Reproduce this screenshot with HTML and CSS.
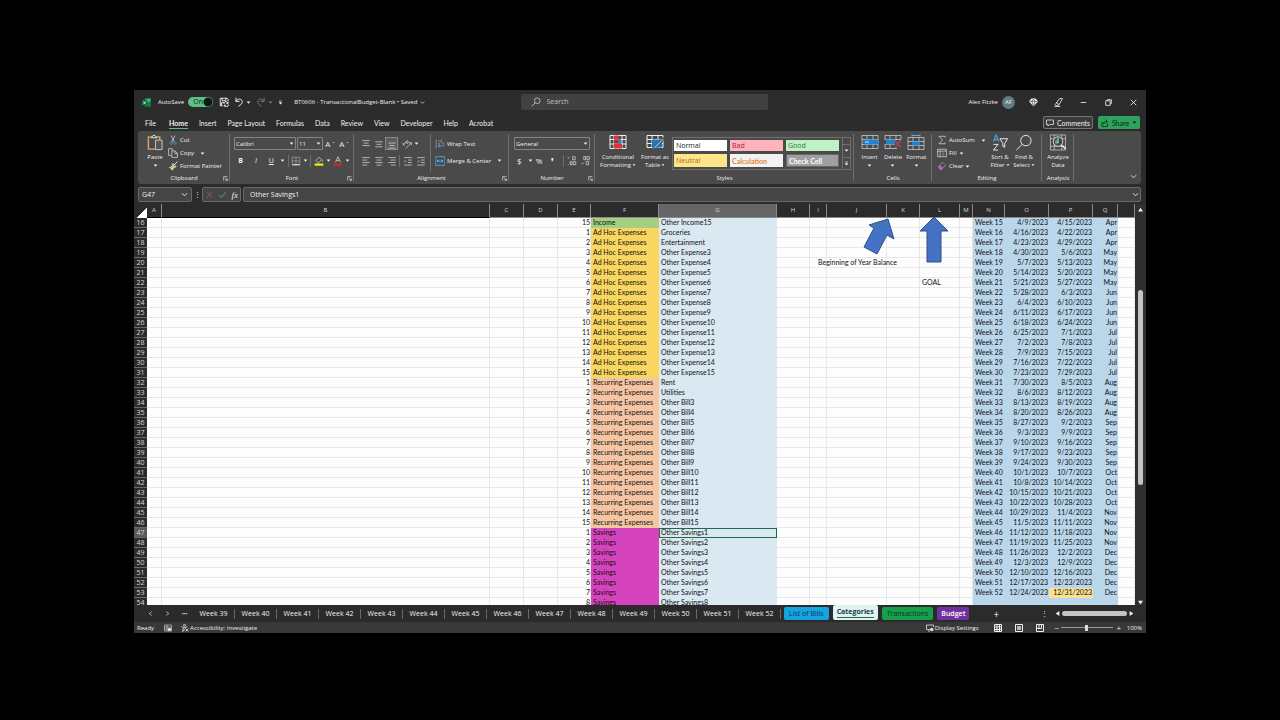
FILE: index.html
```html
<!DOCTYPE html>
<html lang="en">
<head>
  <meta charset="UTF-8">
  <meta name="viewport" content="width=device-width, initial-scale=1.0">
  <title>BT0606 - TransactionalBudget-Blank</title>
  <link rel="stylesheet" href="styles.css">
</head>
<body>
  <svg class="sprite" aria-hidden="true">
    <symbol id="caret" viewBox="0 0 8 8"><path d="M1 2.5h6L4 6z" fill="currentColor"/></symbol>
    <symbol id="chevron" viewBox="0 0 8 8"><path d="M1 2.5l3 3 3-3" class="line"/></symbol>
    <symbol id="launcher" viewBox="0 0 8 8"><path d="M1 7V1h6M3 3l4 4M7 4v3H4" class="line"/></symbol>
    <symbol id="excel" viewBox="0 0 16 16"><path d="M5 1h10v14H5z" fill="#21a366"/><path d="M10 1h5v5h-5z" fill="#33c481"/><path d="M5 8h10v7H5z" fill="#107c41"/><path d="M0 4h9v9H0z" fill="#0b6a38"/><path d="M2.500 6l4 5M6.500 6l-4 5" stroke="#fff" stroke-width="1.400"/></symbol>
    <symbol id="save" viewBox="0 0 16 16"><path d="M2 14V2h11l1.500 1.500V7M5 2v4h6V2M2 14h4M4 14V9h4" class="line thick"/><path d="M8 11a3 3 0 0 1 6-1M14.500 8v2.500H12M15 12a3 3 0 0 1-6 1M8.500 15.500V13H11" class="line thick"/></symbol>
    <symbol id="undo" viewBox="0 0 16 16"><path d="M3 1v6h6M3 7c2-3 5-5 8-3s3 5 0 8l-4 3" class="line thick"/></symbol>
    <symbol id="redo" viewBox="0 0 16 16"><path d="M13 1v6H7M13 7c-2-3-5-5-8-3s-3 5 0 8l4 3" class="line thick"/></symbol>
    <symbol id="customize" viewBox="0 0 8 8"><path d="M1.500 1.500h5" class="line"/><path d="M1 3.500h6L4 7z" fill="currentColor"/></symbol>
    <symbol id="search" viewBox="0 0 16 16"><circle cx="10" cy="6" r="4.500" class="line"/><path d="M7 9l-6 6" class="line"/></symbol>
    <symbol id="gem" viewBox="0 0 16 16"><path d="M4 1h8l4 5-8 9-8-9z" fill="currentColor"/><path d="M1 6h14M5 6l3 8 3-8-3-4z" stroke="#2b2b2b" fill="none"/></symbol>
    <symbol id="pen" viewBox="0 0 16 16"><path d="M10 1h5L9 12l-5 2-2-2zM9 12l-5-4M1 15h10" class="line thick"/></symbol>
    <symbol id="minimize" viewBox="0 0 16 16"><path d="M3 8h10" class="line thick"/></symbol>
    <symbol id="restore" viewBox="0 0 16 16"><path d="M3 5h8v8H3zM6 5V3h7v7h-2" class="line thick"/></symbol>
    <symbol id="close" viewBox="0 0 16 16"><path d="M3 3l10 10M13 3L3 13" class="line thick"/></symbol>
    <symbol id="comment" viewBox="0 0 16 16"><path d="M1 2h14v9H7l-3 3v-3H1z" class="line thick"/></symbol>
    <symbol id="share" viewBox="0 0 16 16"><path d="M5 7H2v8h11V9M5 11c0-4 3-6 7-6M9 1l4 4-4 4" class="line thick"/></symbol>
    <symbol id="paste" viewBox="0 0 18 18"><path d="M5 3H2v13h7" stroke="#e0a458" stroke-width="1.500" fill="none"/><path d="M11 3h3v3" stroke="#e0a458" stroke-width="1.500" fill="none"/><path d="M5 4c0-2 2-1 3-3 1 2 3 1 3 3z" class="line"/><path d="M9.500 6.500h7v10h-7z" fill="#555" stroke="#ccc"/></symbol>
    <symbol id="cut" viewBox="0 0 16 16"><path d="M5 1l5 10M11 1L6 11" class="line"/><circle cx="5" cy="13" r="2" fill="none" stroke="#4aa3df"/><circle cx="11" cy="13" r="2" fill="none" stroke="#4aa3df"/></symbol>
    <symbol id="copy" viewBox="0 0 16 16"><path d="M5 12H1V1h6v3M6 4.500h5l4 4V15H6zM11 5v4h4" class="line"/></symbol>
    <symbol id="painter" viewBox="0 0 16 16"><path d="M15 1l-5 5M8 4l5 5-2 1-4-4z" class="line thick"/><path d="M7 6l4 4-4 5-6-5c3 0 4-1 6-4z" fill="#d8cf9a"/><path d="M4 12l2-2" stroke="#555"/></symbol>
    <symbol id="borders" viewBox="0 0 16 16"><path d="M2 2h12v12H2zM8 2v12M2 8h12" class="line dim"/><path d="M2 14h12" class="line thick"/></symbol>
    <symbol id="fill" viewBox="0 0 16 16"><path d="M3 7l5-5 4 4-5 5zM13 6l1 3" class="line"/><path d="M1 12h14v3.500H1z" fill="#f2ee12"/></symbol>
    <symbol id="font-color" viewBox="0 0 16 16"><path d="M4 10L8 1l4 9M5.500 7h5" class="line"/><path d="M1 12h14v3.500H1z" fill="#d8232a"/></symbol>
    <symbol id="align-top" viewBox="0 0 16 16"><path d="M2 2.500h12M4 6.500h8M2 10.500h12" class="line"/></symbol>
    <symbol id="align-middle" viewBox="0 0 16 16"><path d="M2 4.500h12M4 8.500h8M2 12.500h12" class="line"/></symbol>
    <symbol id="align-bottom" viewBox="0 0 16 16"><path d="M2 6.500h12M4 10.500h8M2 14.500h12" class="line"/></symbol>
    <symbol id="align-left" viewBox="0 0 16 16"><path d="M2 2.500h12M2 6.500h8M2 10.500h12M2 14.500h8" class="line"/></symbol>
    <symbol id="align-center" viewBox="0 0 16 16"><path d="M2 2.500h12M4 6.500h8M2 10.500h12M4 14.500h8" class="line"/></symbol>
    <symbol id="align-right" viewBox="0 0 16 16"><path d="M2 2.500h12M6 6.500h8M2 10.500h12M6 14.500h8" class="line"/></symbol>
    <symbol id="orient" viewBox="0 0 16 16"><path d="M1 6l3 5M1 10l5-5M6 15L15 6M15 10V6h-4" class="line"/><circle cx="8" cy="5" r="2" class="line"/></symbol>
    <symbol id="outdent" viewBox="0 0 16 16"><path d="M2 2.500h12M8 6.500h6M8 10.500h6M2 14.500h12" class="line"/><path d="M6 8.500H2M4 6.500l-2 2 2 2" stroke="#6aa9d6" fill="none"/></symbol>
    <symbol id="indent" viewBox="0 0 16 16"><path d="M2 2.500h12M8 6.500h6M8 10.500h6M2 14.500h12" class="line"/><path d="M2 8.500h4M4 6.500l2 2-2 2" stroke="#6aa9d6" fill="none"/></symbol>
    <symbol id="wrap" viewBox="0 0 16 16"><path d="M2 1v14M5 3h4M5 7h3M10 1v4" class="line dim"/><path d="M5 11h7c4 0 3-5 0-5h-2M8 8l-3 3 3 3" stroke="#6aa9d6" stroke-width="1.300" fill="none"/></symbol>
    <symbol id="merge" viewBox="0 0 16 16"><path d="M1 1h14v14H1z" class="line dim"/><path d="M1 4h14v8H1z" fill="#1c5d8c"/><path d="M3 8h10M5 6L3 8l2 2M11 6l2 2-2 2" stroke="#9ed0f5" fill="none"/></symbol>
    <symbol id="dec-more" viewBox="0 0 16 16"><path d="M5 3H1M3 1L1 3l2 2" stroke="#6aa9d6" fill="none"/><path d="M9 1h4v5H9zM5 9h3v5H5zM10 9h4v5h-4zM2 13v1" class="line"/></symbol>
    <symbol id="dec-less" viewBox="0 0 16 16"><path d="M1 12h5M4 10l2 2-2 2" stroke="#6aa9d6" fill="none"/><path d="M10 9h4v5h-4zM6 1h3v5H6zM11 1h4v5h-4z" class="line"/></symbol>
    <symbol id="cond-format" viewBox="0 0 18 16"><path d="M1 1h16v13H1zM1 5h16M1 9.500h16M5 1v13M13 1v13" class="line"/><path d="M5 1h5v4H5zM5 9.500h8V14H5z" fill="#e0323c"/><path d="M5 5h7v4H5z" fill="#b22a34"/><path d="M9 5h3v4H9z" fill="#2f7fc4"/></symbol>
    <symbol id="table-format" viewBox="0 0 18 16"><path d="M1 1h16v12H1zM1 5h16M1 9h16M6 1v12M12 1v12" class="line"/><path d="M6 5h10v8H6z" fill="#1f78c1"/><path d="M17 3L9 11l-4 4 5-1 8-9z" fill="#58b0ee" stroke="#444"/></symbol>
    <symbol id="cells-insert" viewBox="0 0 18 16"><path d="M1 1h16v13H1zM1 5h16M1 10h16M6 1v13M12 1v13" class="line dim"/><path d="M4 5h13v5H4l-3-2.500z" fill="#1f82d2"/><path d="M8 7.500H4" stroke="#cfe8fb"/></symbol>
    <symbol id="cells-delete" viewBox="0 0 18 16"><path d="M1 1h16v4M1 5V1M1 5h16M1 10h10M1 10v4h12M6 1v13M12 1v4" class="line dim"/><path d="M2 5h9v5H2z" fill="#1f82d2"/><path d="M11 6l6 7M17 6l-6 7" stroke="#b8434b" stroke-width="1.400"/></symbol>
    <symbol id="cells-format" viewBox="0 0 18 16"><path d="M1 3h16v12H1zM1 7h16M1 11h16M6 3v12M12 3v12" class="line dim"/><path d="M5 7h8v4H5z" fill="#1f82d2"/><path d="M5 1h8M5 0v2M13 0v2" stroke="#58b0ee"/></symbol>
    <symbol id="sigma" viewBox="0 0 16 16"><path d="M13 4V2H3l6 6-6 6h10v-2" class="line"/></symbol>
    <symbol id="fill-down" viewBox="0 0 16 16"><path d="M1 2h14v12H1zM1 5h14M5 5v9" class="line"/><path d="M10 6v6M8 10l2 2 2-2" stroke="#58c08a" fill="none"/></symbol>
    <symbol id="eraser" viewBox="0 0 16 16"><path d="M2 9l7-7 5 5-7 7H5z" fill="none" stroke="#d28ad8"/><path d="M2 9l3-3 5 5-3 3H5z" fill="#b45fc0"/></symbol>
    <symbol id="sort" viewBox="0 0 18 18"><path d="M2 8l3-7 3 7M3 6h4" stroke="#4aa3df" fill="none" stroke-width="1.200"/><path d="M2 11h5l-5 6h5" class="line"/><path d="M9 5h8l-3 5v4l-2-1v-3z" class="line"/></symbol>
    <symbol id="find" viewBox="0 0 18 18"><circle cx="11" cy="7" r="5.500" class="line"/><path d="M7 11l-6 6" class="line"/></symbol>
    <symbol id="analyze" viewBox="0 0 18 18"><path d="M1 1h16v16H1zM1 5h16M1 13h16M5 1v16M13 1v16" class="line dim"/><circle cx="9" cy="8" r="5" fill="#444" stroke="#ddd"/><path d="M13 12l4 4" class="line thick"/><path d="M7 10V7M9 10V4" stroke="#7fd6b0" stroke-width="1.500"/></symbol>
    <symbol id="macro" viewBox="0 0 16 16"><path d="M1 2h14v12H1zM1 6h14M6 2v12M1 10h14" class="line"/><circle cx="11" cy="11" r="3.500" fill="#ddd"/></symbol>
    <symbol id="access" viewBox="0 0 16 16"><circle cx="7" cy="2.500" r="2" class="line thick"/><path d="M1 5l4 2-2 8M13 5L9 7M7 10l-2 5M5 7h4v2" class="line thick"/><path d="M9 9l6 6M15 9l-6 6" class="line thick"/></symbol>
    <symbol id="display" viewBox="0 0 16 16"><path d="M8 11H1V2h14v4M4 14h4" class="line thick"/><circle cx="11.500" cy="11" r="3.500" fill="#ddd"/></symbol>
    <symbol id="view-normal" viewBox="0 0 8 8"><path d="M.5.5h7v7h-7zM.5 3h7M.5 5.500h7M3 .5v7M5.500.5v7" class="line"/></symbol>
    <symbol id="view-page" viewBox="0 0 8 8"><path d="M.5.5h7v7h-7z" class="line"/><path d="M2 2h4v4H2z" fill="currentColor" opacity=".7"/></symbol>
    <symbol id="view-break" viewBox="0 0 8 8"><path d="M.5.5h7v7h-7zM3 .5v4h2.500v-4M.5 4.500H3" class="line"/></symbol>
    <symbol id="arrow-left" viewBox="0 0 8 8"><path d="M7 0v8L1 4z" fill="currentColor"/></symbol>
    <symbol id="arrow-right" viewBox="0 0 8 8"><path d="M1 0v8l6-4z" fill="currentColor"/></symbol>
    <symbol id="arrow-up" viewBox="0 0 8 8"><path d="M0 7h8L4 1z" fill="currentColor"/></symbol>
    <symbol id="arrow-down" viewBox="0 0 8 8"><path d="M0 1h8L4 7z" fill="currentColor"/></symbol>
    <symbol id="prev" viewBox="0 0 8 8"><path d="M6 1L2 4l4 3" class="line"/></symbol>
    <symbol id="next" viewBox="0 0 8 8"><path d="M2 1l4 3-4 3" class="line"/></symbol>
    <symbol id="check" viewBox="0 0 16 16"><path d="M2 9l4 4 8-9" fill="none" stroke="#6bb56b" stroke-width="1.500"/></symbol>
    <symbol id="cancel" viewBox="0 0 16 16"><path d="M3 3l10 10M13 3L3 13" fill="none" stroke="#b05050" stroke-width="1.500"/></symbol>
  </svg>

  <div class="window">
    <header class="titlebar">
      <div class="quick-access">
        <svg class="icon logo"><use href="#excel"/></svg>
        <label class="autosave" for="autosave">AutoSave</label>
        <span class="switch"><input type="checkbox" id="autosave" checked><span class="switch-text">On</span></span>
        <button class="tool" aria-label="Save"><svg class="icon"><use href="#save"/></svg></button>
        <button class="tool" aria-label="Undo"><svg class="icon"><use href="#undo"/></svg><svg class="caret"><use href="#caret"/></svg></button>
        <button class="tool faded" aria-label="Redo"><svg class="icon"><use href="#redo"/></svg><svg class="caret"><use href="#caret"/></svg></button>
        <button class="tool" aria-label="Customize toolbar"><svg class="caret"><use href="#customize"/></svg></button>
        <button class="doc-name">BT0606 - TransactionalBudget-Blank • Saved <svg class="caret"><use href="#chevron"/></svg></button>
      </div>
      <div class="search">
        <svg class="icon"><use href="#search"/></svg>
        <input type="text" placeholder="Search" aria-label="Search">
      </div>
      <div class="account">
        <span class="user">Alex Fitzke</span>
        <span class="avatar">AF</span>
        <button class="win-btn" aria-label="Premium"><svg class="icon"><use href="#gem"/></svg></button>
        <button class="win-btn" aria-label="Draw"><svg class="icon"><use href="#pen"/></svg></button>
        <button class="win-btn" aria-label="Minimize"><svg class="icon"><use href="#minimize"/></svg></button>
        <button class="win-btn" aria-label="Restore"><svg class="icon"><use href="#restore"/></svg></button>
        <button class="win-btn" aria-label="Close"><svg class="icon"><use href="#close"/></svg></button>
      </div>
    </header>

    <nav class="menu">
      <button>File</button>
      <button class="active">Home</button>
      <button>Insert</button>
      <button>Page Layout</button>
      <button>Formulas</button>
      <button>Data</button>
      <button>Review</button>
      <button>View</button>
      <button>Developer</button>
      <button>Help</button>
      <button>Acrobat</button>
      <div class="menu-right">
        <button class="comments"><svg class="icon small"><use href="#comment"/></svg>Comments</button>
        <button class="share"><svg class="icon small"><use href="#share"/></svg>Share<svg class="caret"><use href="#caret"/></svg></button>
      </div>
    </nav>

    <div class="ribbon">
      <section class="group clipboard">
        <div class="group-body">
          <button class="big"><svg><use href="#paste"/></svg>Paste<svg class="caret"><use href="#caret"/></svg></button>
          <div class="stack">
            <button class="item"><svg class="icon"><use href="#cut"/></svg>Cut</button>
            <button class="item"><svg class="icon"><use href="#copy"/></svg>Copy <svg class="caret spaced"><use href="#caret"/></svg></button>
            <button class="item"><svg class="icon"><use href="#painter"/></svg>Format Painter</button>
          </div>
        </div>
        <h2>Clipboard</h2>
        <svg class="launcher"><use href="#launcher"/></svg>
      </section>

      <section class="group font">
        <div class="group-body rows">
          <div class="row">
            <span class="drop font-name"><select aria-label="Font"><option>Calibri</option></select><svg class="caret"><use href="#caret"/></svg></span>
            <span class="drop font-size"><select aria-label="Font size"><option>11</option></select><svg class="caret"><use href="#caret"/></svg></span>
            <button class="tool grow" aria-label="Increase font size">A<sup>ˆ</sup></button>
            <button class="tool shrink" aria-label="Decrease font size">A<sup>ˇ</sup></button>
          </div>
          <div class="row">
            <button class="tool letter"><b>B</b></button>
            <button class="tool letter"><i>I</i></button>
            <button class="tool letter"><u>U</u></button>
            <svg class="caret"><use href="#caret"/></svg>
            <span class="divider"></span>
            <button class="tool" aria-label="Borders"><svg class="icon"><use href="#borders"/></svg><svg class="caret"><use href="#caret"/></svg></button>
            <span class="divider"></span>
            <button class="tool" aria-label="Fill color"><svg class="icon"><use href="#fill"/></svg><svg class="caret"><use href="#caret"/></svg></button>
            <button class="tool" aria-label="Font color"><svg class="icon"><use href="#font-color"/></svg><svg class="caret"><use href="#caret"/></svg></button>
          </div>
        </div>
        <h2>Font</h2>
        <svg class="launcher"><use href="#launcher"/></svg>
      </section>

      <section class="group alignment">
        <div class="group-body">
          <div class="rows aligns">
            <div class="row">
              <button class="tool" aria-label="Top"><svg class="icon"><use href="#align-top"/></svg></button>
              <button class="tool" aria-label="Middle"><svg class="icon"><use href="#align-middle"/></svg></button>
              <button class="tool pressed" aria-label="Bottom"><svg class="icon"><use href="#align-bottom"/></svg></button>
              <button class="tool orient" aria-label="Orientation"><svg class="icon"><use href="#orient"/></svg><svg class="caret"><use href="#caret"/></svg></button>
            </div>
            <div class="row">
              <button class="tool" aria-label="Left"><svg class="icon"><use href="#align-left"/></svg></button>
              <button class="tool" aria-label="Center"><svg class="icon"><use href="#align-center"/></svg></button>
              <button class="tool" aria-label="Right"><svg class="icon"><use href="#align-right"/></svg></button>
              <span class="divider"></span>
              <button class="tool" aria-label="Outdent"><svg class="icon"><use href="#outdent"/></svg></button>
              <button class="tool" aria-label="Indent"><svg class="icon"><use href="#indent"/></svg></button>
            </div>
          </div>
          <div class="rows merges">
            <button class="item"><svg class="icon"><use href="#wrap"/></svg>Wrap Text</button>
            <button class="item"><svg class="icon"><use href="#merge"/></svg>Merge &amp; Center <svg class="caret spaced"><use href="#caret"/></svg></button>
          </div>
        </div>
        <h2>Alignment</h2>
        <svg class="launcher"><use href="#launcher"/></svg>
      </section>

      <section class="group number">
        <div class="group-body rows">
          <div class="row">
            <span class="drop number-format"><select aria-label="Number format"><option>General</option></select><svg class="caret"><use href="#caret"/></svg></span>
          </div>
          <div class="row symbols">
            <button class="tool">$<svg class="caret spaced"><use href="#caret"/></svg></button>
            <button class="tool">%</button>
            <button class="tool comma"><b>❜</b></button>
            <span class="divider"></span>
            <button class="tool" aria-label="Increase decimal"><svg class="icon"><use href="#dec-more"/></svg></button>
            <button class="tool" aria-label="Decrease decimal"><svg class="icon"><use href="#dec-less"/></svg></button>
          </div>
        </div>
        <h2>Number</h2>
        <svg class="launcher"><use href="#launcher"/></svg>
      </section>

      <section class="group styles">
        <div class="group-body">
          <button class="big"><svg><use href="#cond-format"/></svg>Conditional<span>Formatting <svg class="caret"><use href="#caret"/></svg></span></button>
          <button class="big"><svg><use href="#table-format"/></svg>Format as<span>Table <svg class="caret"><use href="#caret"/></svg></span></button>
          <div class="gallery">
            <div class="swatches">
              <button class="normal">Normal</button>
              <button class="bad">Bad</button>
              <button class="good">Good</button>
              <button class="neutral">Neutral</button>
              <button class="calculation">Calculation</button>
              <button class="check-cell">Check Cell</button>
            </div>
            <div class="gallery-nav">
              <button aria-label="Up"></button>
              <button aria-label="Down"><svg class="caret"><use href="#caret"/></svg></button>
              <button aria-label="More"><svg class="caret"><use href="#customize"/></svg></button>
            </div>
          </div>
        </div>
        <h2>Styles</h2>
      </section>

      <section class="group cells">
        <div class="group-body">
          <button class="big"><svg><use href="#cells-insert"/></svg>Insert<svg class="caret"><use href="#caret"/></svg></button>
          <button class="big"><svg><use href="#cells-delete"/></svg>Delete<svg class="caret"><use href="#caret"/></svg></button>
          <button class="big"><svg><use href="#cells-format"/></svg>Format<svg class="caret"><use href="#caret"/></svg></button>
        </div>
        <h2>Cells</h2>
      </section>

      <section class="group editing">
        <div class="group-body">
          <div class="stack">
            <button class="item"><svg class="icon"><use href="#sigma"/></svg>AutoSum <svg class="caret spaced"><use href="#caret"/></svg></button>
            <button class="item"><svg class="icon"><use href="#fill-down"/></svg>Fill <svg class="caret"><use href="#caret"/></svg></button>
            <button class="item"><svg class="icon"><use href="#eraser"/></svg>Clear <svg class="caret"><use href="#caret"/></svg></button>
          </div>
          <button class="big"><svg><use href="#sort"/></svg>Sort &amp;<span>Filter <svg class="caret"><use href="#caret"/></svg></span></button>
          <button class="big"><svg><use href="#find"/></svg>Find &amp;<span>Select <svg class="caret"><use href="#caret"/></svg></span></button>
        </div>
        <h2>Editing</h2>
      </section>

      <section class="group analysis">
        <div class="group-body">
          <button class="big"><svg><use href="#analyze"/></svg>Analyze<span>Data</span></button>
        </div>
        <h2>Analysis</h2>
      </section>
      <button class="collapse" aria-label="Collapse ribbon"><svg class="caret"><use href="#chevron"/></svg></button>
    </div>

    <div class="formula-bar">
      <div class="name-box"><input type="text" value="G47" aria-label="Name box"><svg class="caret"><use href="#chevron"/></svg></div>
      <span class="grip">⋮</span>
      <div class="fx">
        <button aria-label="Cancel"><svg class="icon"><use href="#cancel"/></svg></button>
        <button aria-label="Enter"><svg class="icon"><use href="#check"/></svg></button>
        <button class="fn">fx</button>
      </div>
      <div class="formula"><input type="text" value="Other Savings1" aria-label="Formula"><svg class="caret"><use href="#chevron"/></svg></div>
    </div>

    <main class="sheet">
      <div class="grid">
        <table>
          <colgroup id="cols"></colgroup>
          <thead><tr id="letters"></tr></thead>
          <tbody id="rows"></tbody>
        </table>
        <svg class="arrows" viewBox="0 0 92 50" width="92" height="50">
          <path d="M28 4l6 20-7-4-10 19-13-7 10-19-5-3z"/>
          <path d="M74 2l14 14h-7v31H67V16h-7z"/>
        </svg>
      </div>
      <div class="vscroll">
        <svg class="tri"><use href="#arrow-up"/></svg>
        <div class="track"><div class="thumb"></div></div>
        <svg class="tri"><use href="#arrow-down"/></svg>
      </div>
    </main>

    <div class="sheet-tabs">
      <div class="tab-nav">
        <button aria-label="Previous"><svg class="caret"><use href="#prev"/></svg></button>
        <button aria-label="Next"><svg class="caret"><use href="#next"/></svg></button>
        <button aria-label="More sheets">•••</button>
      </div>
      <div class="weeks" id="weeks"></div>
      <button class="tab bills">List of Bills</button>
      <button class="tab categories"><span>Categories</span></button>
      <button class="tab transactions">Transactions</button>
      <button class="tab budget">Budget</button>
      <button class="add" aria-label="New sheet">+</button>
      <div class="hscroll">
        <span class="grip">⋮</span>
        <svg class="tri"><use href="#arrow-left"/></svg>
        <div class="thumb"></div>
        <svg class="tri"><use href="#arrow-right"/></svg>
      </div>
    </div>

    <footer class="status">
      <span class="ready">Ready</span>
      <svg class="icon"><use href="#macro"/></svg>
      <button class="access"><svg class="icon"><use href="#access"/></svg>Accessibility: Investigate</button>
      <div class="status-right">
        <button class="display"><svg class="icon"><use href="#display"/></svg>Display Settings</button>
        <button class="view" aria-label="Normal"><svg class="icon"><use href="#view-normal"/></svg></button>
        <button class="view" aria-label="Page layout"><svg class="icon"><use href="#view-page"/></svg></button>
        <button class="view" aria-label="Page break"><svg class="icon"><use href="#view-break"/></svg></button>
        <span class="zoom-sign">−</span>
        <input type="range" class="zoom" min="0" max="100" value="50" aria-label="Zoom">
        <span class="zoom-sign">+</span>
        <span class="percent">100%</span>
      </div>
    </footer>
  </div>

  <script>
    const letters = 'ABCDEFGHIJKLMNOPQR'.split('');
    const months = ['Jan', 'Feb', 'Mar', 'Apr', 'May', 'Jun', 'Jul', 'Aug', 'Sep', 'Oct', 'Nov', 'Dec'];
    const firstRow = 16;
    const lastRow = 54;

    document.getElementById('cols').innerHTML =
      '<col class="col-head">' + letters.map(l => `<col class="col-${l.toLowerCase()}">`).join('');
    document.getElementById('letters').innerHTML =
      '<th class="corner"></th>' + letters.map(l => `<th class="${l === 'G' ? 'selected' : ''}">${l === 'R' ? '' : l}</th>`).join('');

    function category(row) {
      if (row === 16) return { n: 15, type: 'Income', cls: 'income', name: 'Other Income15' };
      if (row < 32) {
        const n = row - 16;
        const name = n === 1 ? 'Groceries' : n === 2 ? 'Entertainment' : 'Other Expense' + n;
        return { n, type: 'Ad Hoc Expenses', cls: 'adhoc', name };
      }
      if (row < 47) {
        const n = row - 31;
        const name = n === 1 ? 'Rent' : n === 2 ? 'Utilities' : 'Other Bill' + n;
        return { n, type: 'Recurring Expenses', cls: 'recurring', name };
      }
      const n = row - 46;
      return { n, type: 'Savings', cls: 'savings', name: 'Other Savings' + n };
    }

    function format(d) {
      return `${d.getMonth() + 1}/${d.getDate()}/${d.getFullYear()}`;
    }

    function week(row) {
      const number = row - 1;
      if (number > 52) return null;
      const start = new Date(2023, 3, 9 + (number - 15) * 7);
      // the last week runs through the end of the year
      const end = new Date(2023, 3, 15 + (number - 15) * 7 + (number === 52 ? 1 : 0));
      return { number, start, end };
    }

    let html = '';
    for (let row = firstRow; row <= lastRow; row++) {
      const c = category(row);
      const w = week(row);
      const cells = letters.map(l => {
        if (l === 'E') return `<td class="right">${c.n}</td>`;
        if (l === 'F') return `<td class="filled ${c.cls}">${c.type}</td>`;
        if (l === 'G') return `<td class="filled name ${row === 47 ? 'current' : ''}">${c.name}</td>`;
        if (l === 'J' && row === 20) return '<td><div class="overflow">Beginning of Year Balance</div></td>';
        if (l === 'L' && row === 22) return '<td>GOAL</td>';
        if ('NOPQ'.includes(l)) {
          if (!w) return '<td class="filled week"></td>';
          if (l === 'N') return `<td class="filled week">Week ${w.number}</td>`;
          if (l === 'O') return `<td class="filled week right">${format(w.start)}</td>`;
          if (l === 'P') return `<td class="filled week right ${w.number === 52 ? 'last' : ''}">${format(w.end)}</td>`;
          return `<td class="filled week right">${months[w.end.getMonth()]}</td>`;
        }
        return '<td></td>';
      }).join('');
      html += `<tr><th class="${row === 47 ? 'selected' : ''}">${row}</th>${cells}</tr>`;
    }
    document.getElementById('rows').innerHTML = html;

    let tabs = '';
    for (let i = 39; i <= 52; i++) {
      tabs += `<button>Week ${i}</button>`;
    }
    document.getElementById('weeks').innerHTML = tabs;
  </script>
</body>
</html>
```
FILE: styles.css
```css
* {
  box-sizing: border-box;
}

body {
  display: flex;
  height: 100vh;
  margin: 0;
  padding: 90px 134px 87px;
  background-color: #000;
  color: #f0f0f0;
  font-family: "Open Sans", "Noto Sans", sans-serif;
  font-size: 7px;
  line-height: 10px;
}

button, input, select {
  margin: 0;
  padding: 0;
  border: none;
  outline: none;
  background: none;
  color: inherit;
  font: inherit;
}

button {
  display: flex;
  align-items: center;
  justify-content: center;
  white-space: nowrap;
}

svg {
  display: block;
  flex: none;
}

.sprite {
  position: absolute;
  width: 0;
  height: 0;
}

.line {
  fill: none;
  stroke: currentColor;
}

.thick {
  stroke-width: 1.5;
}

.dim {
  opacity: 0.6;
}

.icon {
  width: 10px;
  height: 10px;
}

.small {
  width: 8px;
  height: 8px;
}

.caret {
  width: 5px;
  height: 5px;
}

.window {
  display: flex;
  flex: 1;
  flex-direction: column;
  min-width: 0;
  background-color: #2b2b2b;
}

/* title bar */
.titlebar {
  display: grid;
  grid-template-columns: 1fr 247px 1fr;
  align-items: center;
  height: 24px;
  padding-left: 8px;
}

.quick-access, .account {
  display: flex;
  align-items: center;
}

.quick-access .tool {
  gap: 2px;
  margin-right: 5px;
}

.logo {
  width: 9px;
  height: 9px;
  margin-right: 7px;
}

.autosave {
  font-size: 6px;
}

.switch {
  position: relative;
  width: 25px;
  height: 10px;
  margin: 0 6px 0 4px;
}

.switch input {
  display: block;
  width: 25px;
  height: 10px;
  border-radius: 5px;
  appearance: none;
  background: radial-gradient(circle at 20px 5px, #0d1a12 4px, #5cc084 5px);
}

.switch-text {
  position: absolute;
  top: 0;
  left: 5px;
  color: #10291a;
  pointer-events: none;
}

.faded {
  opacity: 0.4;
}

.doc-name {
  gap: 3px;
  margin-left: 6px;
  font-size: 6px;
}

.search {
  display: flex;
  align-items: center;
  gap: 6px;
  height: 16px;
  padding-left: 10px;
  border-radius: 2px;
  background-color: #414141;
}

.search input {
  flex: 1;
}

.search input::placeholder {
  color: #c0c0c0;
}

.account {
  justify-content: flex-end;
}

.user {
  margin-right: 4px;
  font-size: 6px;
}

.avatar {
  width: 13px;
  height: 13px;
  margin-right: 6px;
  border-radius: 50%;
  background-color: #5f7a80;
  font-size: 6px;
  line-height: 13px;
  text-align: center;
}

.win-btn {
  width: 25px;
  height: 24px;
}

.win-btn .icon {
  width: 9px;
  height: 9px;
}

/* menu */
.menu {
  display: flex;
  gap: 11px;
  height: 17px;
  padding: 0 6px 0 11px;
  font-family: Lato, "Noto Sans", sans-serif;
}

.menu > button {
  height: 15px;
  padding-top: 3px;
  border-bottom: 1px solid transparent;
}

.menu > .active {
  margin: 0 0 0 2px;
  border-color: #5cc084;
  font-weight: 700;
}

.menu-right {
  display: flex;
  gap: 5px;
  margin-left: auto;
}

.menu-right button {
  gap: 3px;
  height: 13px;
  margin-top: 2px;
  border-radius: 2px;
}

.comments {
  width: 50px;
  border: 1px solid #757575;
  background-color: #3a3a3a;
}

.share {
  width: 42px;
  background-color: #2fa35c;
  color: #0a2414;
}

/* ribbon */
.ribbon {
  position: relative;
  display: flex;
  height: 53px;
  margin: 0 5px 3px 4px;
  border-radius: 3px;
  background-color: #4a4a4a;
  font-size: 6px;
  line-height: 8px;
}

.group {
  position: relative;
  display: flex;
  flex-direction: column;
}

.group::after {
  content: "";
  position: absolute;
  top: 3px;
  right: 0;
  bottom: 3px;
  border-right: 1px solid #6e6e6e;
}

.group h2 {
  margin: 0;
  font-size: 6px;
  font-weight: 400;
  line-height: 12px;
  text-align: center;
}

.group-body {
  display: flex;
  flex: 1;
  padding-top: 3px;
}

.launcher {
  position: absolute;
  right: 2px;
  bottom: 3px;
  width: 5px;
  height: 5px;
}

.clipboard { width: 92px; }
.font { width: 124px; }
.alignment { width: 155px; }
.number { width: 86px; }
.styles { width: 259px; }
.cells { width: 78px; }
.editing { width: 110px; }
.analysis { width: 32px; }

.big {
  flex-direction: column;
  justify-content: flex-start;
  height: 38px;
}

.big > svg:first-child {
  width: 18px;
  height: 17px;
  margin-bottom: 2px;
}

.big > .caret {
  margin-top: 2px;
}

.big span {
  display: flex;
  align-items: center;
  gap: 1px;
}

.big span .caret {
  width: 4px;
  height: 4px;
}

.stack, .rows {
  display: flex;
  flex-direction: column;
}

.stack {
  justify-content: space-between;
}

.item {
  justify-content: flex-start;
  gap: 2px;
  height: 12px;
}

.spaced {
  margin-left: 4px;
}

.row {
  display: flex;
  align-items: center;
  height: 13px;
}

.rows {
  gap: 4px;
}

.row .tool {
  gap: 2px;
  height: 13px;
}

.divider {
  width: 1px;
  height: 12px;
  background-color: #6e6e6e;
}

.drop {
  position: relative;
  display: flex;
  align-items: center;
  height: 13px;
  border: 1px solid #858585;
  border-radius: 1px;
}

.drop select {
  width: 100%;
  padding-left: 1px;
  appearance: none;
}

.drop .caret {
  position: absolute;
  right: 1px;
}

.clipboard .group-body {
  gap: 2px;
  padding-left: 6px;
}

.clipboard .big {
  width: 22px;
}

.font .rows {
  padding-left: 4px;
}

.font-name {
  width: 62px;
  margin-right: 1px;
}

.font-size {
  width: 26px;
}

.grow, .shrink {
  width: 14px;
  font-size: 8px;
}

.grow sup, .shrink sup {
  font-size: 6px;
}

.font .row + .row {
  justify-content: space-between;
  padding-right: 4px;
  font-size: 7px;
}

.font .letter {
  width: 13px;
}

.aligns {
  width: 77px;
  padding-left: 5px;
  border-right: 1px solid #6e6e6e;
}

.alignment .rows {
  padding-top: 3px;
}

.rows.group-body {
  padding-top: 6px;
}

.aligns .tool {
  min-width: 13px;
}

.aligns .orient {
  margin-left: 4px;
}

.aligns .divider {
  margin: 0 1px;
}

.pressed {
  border: 1px solid #8a8a8a;
  background-color: #5c5c5c;
}

.merges {
  padding-left: 4px;
}

.merges .item {
  height: 13px;
}

.number .group-body {
  padding-left: 5px;
}

.number-format {
  width: 76px;
}

.symbols {
  justify-content: space-between;
  padding: 0 5px 0 3px;
  font-size: 8px;
}

.comma {
  width: 14px;
}

.styles .group-body {
  padding-left: 3px;
}

.styles .big {
  width: 40px;
}

.styles .big + .big {
  width: 34px;
}

.gallery {
  display: flex;
  height: 33px;
  margin-top: 3px;
  border: 1px solid #6e6e6e;
}

.swatches {
  display: grid;
  grid-template-columns: repeat(3, 53px);
  gap: 3px;
  padding: 2px 3px 2px 1px;
}

.swatches button {
  justify-content: flex-start;
  padding-left: 2px;
  font-size: 7px;
}

.normal { background-color: #fff; color: #222; }
.bad { background-color: #ffb3bd; color: #a5243a; }
.good { background-color: #bff0c6; color: #2c7a3a; }
.neutral { background-color: #ffe58a; color: #97701a; }

.swatches .calculation, .swatches .check-cell {
  font-family: Lato, "Noto Sans", sans-serif;
  font-weight: 700;
}

.calculation { background-color: #f2f2f2; color: #e08a3c; }
.check-cell { border: 1px solid #666; background-color: #a0a0a0; color: #fff; }

.gallery-nav {
  display: grid;
  width: 8px;
  border-left: 1px solid #6e6e6e;
}

.gallery-nav button + button {
  border-top: 1px solid #6e6e6e;
}

.cells .group-body {
  padding: 3px 4px 0;
}

.cells .big {
  flex: 1;
}

.editing .group-body {
  padding-left: 5px;
}

.editing .stack {
  width: 51px;
}

.editing .big {
  width: 24px;
}

.analysis .group-body {
  justify-content: center;
}

.collapse {
  position: absolute;
  right: 4px;
  bottom: 4px;
}

.collapse .caret, .formula-bar .caret {
  width: 7px;
  height: 7px;
}

/* formula bar */
.formula-bar {
  display: flex;
  height: 15px;
  margin: 0 5px 2px 4px;
}

.name-box, .fx, .formula {
  display: flex;
  align-items: center;
  border: 1px solid #6a6a6a;
  border-radius: 2px;
  background-color: #454545;
}

.name-box {
  width: 54px;
  padding: 0 3px;
}

.name-box input, .formula input {
  flex: 1;
  min-width: 0;
}

.grip {
  width: 10px;
  line-height: 15px;
  text-align: center;
}

.fx {
  justify-content: space-around;
  width: 39px;
  margin-right: 2px;
}

.fx .icon {
  width: 9px;
  height: 9px;
}

.fn {
  font-family: "Liberation Serif", serif;
  font-size: 9px;
  font-style: italic;
}

.formula {
  flex: 1;
  padding: 0 1px 0 6px;
}

/* worksheet */
.sheet {
  position: relative;
  display: flex;
  flex: 1;
  min-height: 0;
  overflow: hidden;
}

.grid {
  position: relative;
  flex: 1;
  min-width: 0;
  background-color: #fdfdfd;
  color: #111;
}

table {
  width: 100%;
  border-spacing: 0;
  table-layout: fixed;
  font-family: Lato, "Noto Sans", sans-serif;
  font-size: 7px;
  line-height: 9px;
}

.col-head { width: 13px; }
.col-a { width: 15px; }
.col-c, .col-d { width: 34px; }
.col-e, .col-h, .col-k { width: 33px; }
.col-f { width: 68px; }
.col-g { width: 118px; }
.col-i, .col-r { width: 17px; }
.col-j { width: 60px; }
.col-l { width: 40px; }
.col-m { width: 13px; }
.col-n { width: 32px; }
.col-o, .col-p { width: 44px; }
.col-q { width: 25px; }

th {
  padding: 0;
  background-color: #2b2b2b;
  color: #d8d8d8;
  font-family: "Open Sans", "Noto Sans", sans-serif;
  font-size: 6px;
  font-weight: 400;
}

thead th {
  height: 14px;
  border-right: 1px solid #8a8a8a;
  border-bottom: 1px solid #8a8a8a;
}

thead th:nth-child(2), thead th:nth-child(3) {
  border-bottom-color: #000;
}

thead .selected {
  background-color: #666;
}

thead .corner {
  border: none;
  background-image: linear-gradient(135deg, transparent 62%, #fff 62%);
}

tbody th {
  height: 10px;
  border-bottom: 1px solid #6a6a6a;
  font-size: 7px;
}

tbody .selected {
  background-color: #5a5a5a;
}

td {
  height: 10px;
  padding: 0 0 0 2px;
  border-right: 1px solid #e8e8e8;
  border-bottom: 1px solid #e8e8e8;
  white-space: nowrap;
}

.right {
  text-align: right;
}

.filled {
  border: none;
  padding-bottom: 1px;
}

.week {
  padding-right: 1px;
}

.income { background-color: #a3cf82; }
.adhoc { background-color: #f9d660; }
.recurring { background-color: #f6c6a4; }
.savings { background-color: #d544bd; }
.name { background-color: #dae8f2; }
.week { background-color: #bad6eb; }
.week.last { background-color: #fbe192; }

.current {
  outline: 1px solid #1e6b45;
  outline-offset: -1px;
}

.overflow {
  display: flex;
  justify-content: center;
}

.arrows {
  position: absolute;
  top: 11px;
  right: 183px;
  fill: #4472c4;
  stroke: #2f4f8a;
}

.vscroll {
  display: flex;
  flex-direction: column;
  align-items: center;
  width: 11px;
  padding: 3px 0 0;
  background-color: #303030;
}

.tri {
  width: 5px;
  height: 5px;
}

.track {
  flex: 1;
  padding-top: 78px;
}

.thumb {
  border-radius: 3px;
  background-color: #c4c4c4;
}

.track .thumb {
  width: 5px;
  height: 63%;
}

/* sheet tabs */
.sheet-tabs {
  display: flex;
  align-items: center;
  height: 17px;
  background-color: #2b2b2b;
}

.tab-nav {
  display: flex;
  width: 59px;
  padding-left: 8px;
}

.tab-nav button {
  width: 17px;
  font-size: 5px;
}

.weeks {
  display: flex;
}

.weeks button {
  width: 42px;
  height: 10px;
  border-right: 1px solid #6a6a6a;
}

.tab {
  height: 13px;
  margin-right: 4px;
  padding: 0 4px;
  border-radius: 2px;
}

.bills {
  margin-left: 3px;
  padding: 0 5px;
  background-color: #16a4e0;
  color: #0a3850;
}

.categories {
  height: 15px;
  margin-bottom: 2px;
  background-color: #dff3f5;
  color: #1a3c3c;
  font-weight: 700;
}

.categories span {
  border-bottom: 1px solid #1e6b45;
}

.transactions {
  padding: 0 5px;
  background-color: #16a04c;
  color: #06361a;
}

.budget {
  background-color: #7030a0;
  color: #fff;
  font-weight: 600;
}

.add {
  margin-left: 20px;
  font-size: 10px;
}

.hscroll {
  display: flex;
  align-items: center;
  gap: 2px;
  margin-left: auto;
  padding-right: 12px;
}

.hscroll .thumb {
  width: 65px;
  height: 5px;
}

.hscroll .grip {
  margin-right: 4px;
}

/* status bar */
.status {
  display: flex;
  align-items: center;
  height: 11px;
  padding: 0 4px 0 3px;
  background-color: #383838;
  font-size: 6px;
}

.status .icon {
  width: 8px;
  height: 8px;
}

.ready {
  margin-right: 10px;
}

.access, .display {
  gap: 1px;
}

.access {
  margin-left: 9px;
}

.status-right {
  display: flex;
  align-items: center;
  margin-left: auto;
}

.display {
  margin-right: 9px;
}

.view {
  width: 21px;
  height: 11px;
}

.zoom-sign {
  width: 8px;
  margin-left: 2px;
  font-size: 8px;
  text-align: center;
}

.zoom {
  width: 52px;
  height: 9px;
  appearance: none;
  background: linear-gradient(#999, #999) center / 100% 1px no-repeat;
}

.zoom::-webkit-slider-thumb {
  width: 3px;
  height: 6px;
  appearance: none;
  background-color: #ddd;
}

.percent {
  margin-left: 4px;
}
```
